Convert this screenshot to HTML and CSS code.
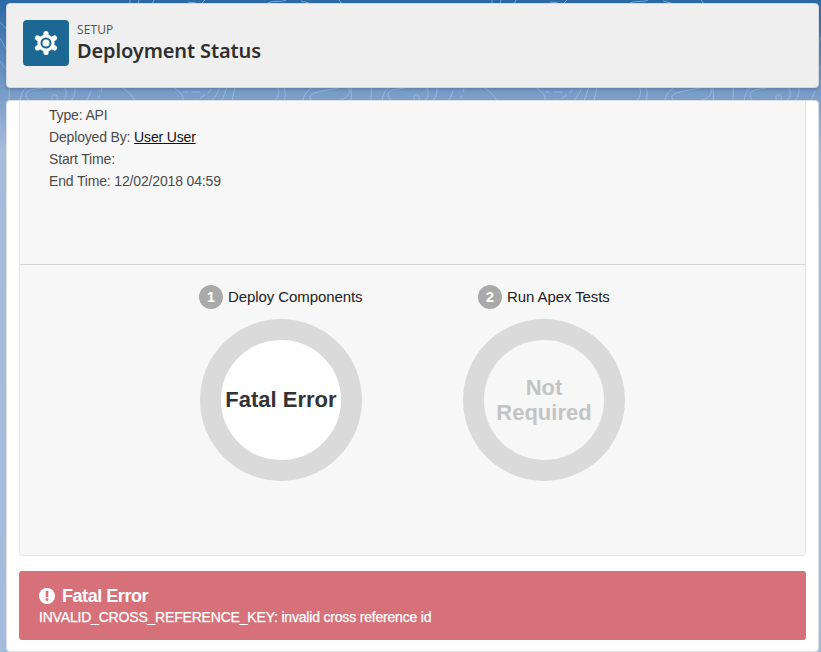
FILE: index.html
```
<!DOCTYPE html>
<html lang="en">
<head>
<meta charset="utf-8">
<title>Deployment Status</title>
<link rel="stylesheet" href="styles.css">
</head>
<body>
<svg class="backdrop" width="821" height="652" aria-hidden="true">
  <defs>
    <pattern id="contours" width="362" height="170" patternUnits="userSpaceOnUse">
      <path d="M9 87c1 5 0 9 0 14M20 101c1-8 4-13 9-15M29 101c-6-8-2-11 7-12l11-2c5-2 3-3 3-3M53 101c-3-6 1-8 4-5 1 3 0 4-2 5M63 101c4-4 4-10 1-15M71 101c4-6 5-10 3-15M86 101c3-3 3-6 5-10M98 98l2-3m1-3 1-4M120 86c5 3 12 9 15 15M173 87c6 4 11 7 10 15M183 92h5m4 0h8M190 101l6-1m4-2 5-3m3-2 3-4M211 101c5-4 7-9 9-14M222 101l5-14M232 101l3-14M275 101c5-7 4-11 2-15M284 101c2-6 1-11 0-15M303 101c0-6 5-11 11-15M311 100c-8-10 28-9 33-15M332 101c19 0 20-12 14-16M351 101c1-6 0-10 0-15"/>
      <path d="M130 0v3M139 0l-1 4M154 0l-2 4M188 2l8 1M205 0l-4 4M268 3c6-3 12 0 18-3M301 1l8 2M339 0l3 4"/>
    </pattern>
  </defs>
  <rect class="contours" width="821" height="106" fill="url(#contours)"/>
  <path class="contours" d="M0 22c2 2 4 4 6 7M0 38l6 11M0 61l6 8M0 125c4 7 5 14 6 21M821 37l-3 6M818 71l3-5"/>
</svg>
<main class="page">
  <header class="header">
    <span class="tile">
      <svg viewBox="-12 -12 24 24" width="24" height="24" aria-hidden="true">
        <circle r="8.6" fill="#fff"/>
        <path class="teeth" d="M0-9.4V9.4M-8.5-4.9 8.5 4.9M-8.5 4.9 8.5-4.9"/>
        <circle class="gear-ring" r="4.5"/>
      </svg>
    </span>
    <div class="heading">
      <p class="eyebrow">SETUP</p>
      <h1 class="title">Deployment Status</h1>
    </div>
  </header>
  <section class="content">
    <div class="panel">
      <div class="details">
        <p>Type: API</p>
        <p>Deployed By: <a class="user" href="#">User User</a></p>
        <p>Start Time:</p>
        <p>End Time: <span class="time">12/02/2018 04:59</span></p>
      </div>
      <div class="steps">
        <section class="step">
          <h2 class="step-title"><span class="number">1</span><span class="step-name">Deploy Components</span></h2>
          <div class="ring failed"><span>Fatal Error</span></div>
        </section>
        <section class="step">
          <h2 class="step-title tests"><span class="number">2</span><span class="step-name">Run Apex Tests</span></h2>
          <div class="ring skipped"><span>Not<br>Required</span></div>
        </section>
      </div>
    </div>
    <div class="alert">
      <h3 class="alert-title">
        <svg viewBox="0 0 16 16" width="16" height="16" aria-hidden="true"><circle cx="8" cy="8" r="8" fill="#fff"/><path d="M6.5 3h3L9.2 9H6.8z" fill="#d77179"/><circle cx="8" cy="11.6" r="1.5" fill="#d77179"/></svg>
        <span>Fatal Error</span>
      </h3>
      <p class="message">INVALID_CROSS_REFERENCE_KEY: invalid cross reference id</p>
    </div>
  </section>
</main>
</body>
</html>
```
FILE: styles.css
```
* { box-sizing: border-box; }
body {
  margin: 0;
  height: 652px;
  overflow: hidden;
  position: relative;
  font-family: "Liberation Sans", Arial, sans-serif;
  color: #4b4b4b;
  background: linear-gradient(#2a68a6 0, #799dc9 94px, #a7bbdc 152px, #a5bbdd 100%);
}
h1, h2, h3, p { margin: 0; }
.backdrop { position: absolute; inset: 0; }
.contours { stroke: #a4bddc; stroke-opacity: .5; stroke-width: 1; fill: none; }
pattern path { stroke: #adc5e2; stroke-opacity: .65; stroke-width: 1; fill: none; }
rect.contours { fill: url(#contours); stroke: none; }
.page { position: relative; padding: 3px 2px 0 6px; }
.header {
  height: 85px;
  display: flex;
  align-items: flex-start;
  gap: 8px;
  padding: 16px;
  background: #efefef;
  border: 1px solid #d7d9dc;
  border-radius: 4px;
  box-shadow: 0 2px 3px rgba(0, 0, 0, .15);
}
.tile {
  width: 46px;
  height: 46px;
  display: grid;
  place-items: center;
  background: #1b6895;
  border-radius: 4px;
}
.teeth { stroke: #fff; stroke-width: 5.2; stroke-linecap: round; fill: none; }
.gear-ring { fill: #fff; stroke: #1b6895; stroke-width: 2; }
.heading { padding-top: 1px; }
.eyebrow {
  font: 12px/18px "Open Sans", sans-serif;
  color: #54534f;
  letter-spacing: .1px;
}
.title {
  font: 600 20px/24px "Noto Sans", sans-serif;
  letter-spacing: -.12px;
  color: #2f302d;
  white-space: nowrap;
}
.content {
  height: 552px;
  margin-top: 12px;
  padding: 0 12px;
  background: #fff;
  border: 1px solid #dddfe2;
  border-radius: 4px;
}
.panel {
  height: 455px;
  background: #f7f7f7;
  border: 1px solid #e4e4e4;
  border-top: 0;
  border-radius: 0 0 4px 4px;
}
.details {
  height: 164px;
  padding: 3px 29px;
  border-bottom: 1px solid #d6d6d6;
  font-size: 14px;
  line-height: 22px;
  letter-spacing: -.16px;
}
.user { color: #111; text-underline-offset: 1px; }
.steps { display: flex; justify-content: center; gap: 101px; padding-top: 19px; }
.step { width: 162px; }
.step-title {
  height: 26px;
  display: flex;
  align-items: center;
  gap: 5px;
  margin-left: -1px;
  font-size: 15px;
  font-weight: 400;
  color: #222;
  white-space: nowrap;
}
.step-name { padding-bottom: 2px; letter-spacing: -.09px; }
.tests { margin-left: 15px; }
.number {
  flex: none;
  width: 24px;
  height: 24px;
  border-radius: 50%;
  background: #a9a9a9;
  color: #fff;
  font: bold 15px/24px "Liberation Sans", Arial, sans-serif;
  text-align: center;
  box-shadow: 0 0 1px #fff;
}
.ring {
  width: 162px;
  height: 162px;
  display: grid;
  place-items: center;
  margin-top: 9px;
  border: 21px solid #dadada;
  border-radius: 50%;
  font-size: 22px;
  line-height: 25px;
  font-weight: 700;
  text-align: center;
  white-space: nowrap;
}
.failed { background: #fff; color: #333; padding-bottom: 2px; }
.skipped { color: #c4c4c4; }
.alert {
  height: 69px;
  margin-top: 15px;
  padding: 15px 20px;
  background: #d77179;
  border-radius: 3px;
  color: #fff;
}
.alert-title { height: 20px; display: flex; align-items: center; gap: 7px; font-size: 18px; letter-spacing: -.45px; }
.message { font-size: 14px; line-height: 22px; letter-spacing: -.19px; white-space: nowrap; -webkit-text-stroke: .25px #fff; }
```
